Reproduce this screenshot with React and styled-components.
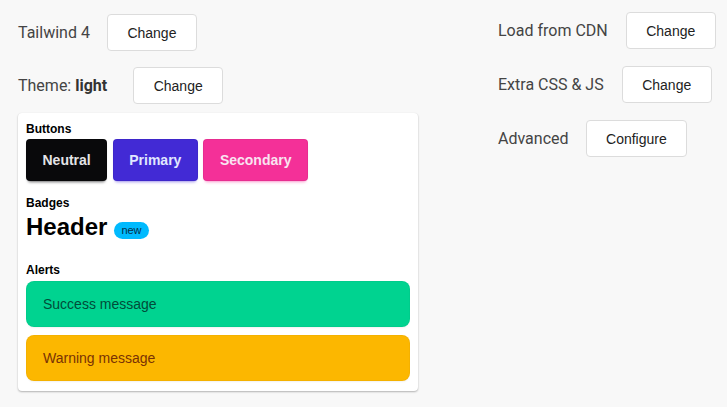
import React from 'react';
import styled, { createGlobalStyle } from 'styled-components';

const GlobalStyle = createGlobalStyle`
  html, body {
    margin: 0;
    padding: 0;
    background: #f8f8f8;
  }
  body {
    font-family: "Liberation Sans", Arial, sans-serif;
  }
`;

const Page = styled.div`
  display: flex;
  align-items: flex-start;
  padding-left: 18px;
  height: 407px;
  box-sizing: border-box;
`;

const Column = styled.div`
  display: flex;
  flex-direction: column;
  padding-top: ${(p) => p.top}px;
  width: ${(p) => (p.width ? `${p.width}px` : 'auto')};
  margin-left: ${(p) => p.offset || 0}px;
`;

const Settings = styled.div`
  display: flex;
  flex-direction: column;
  gap: ${(p) => p.gap}px;
`;

const Row = styled.div`
  display: flex;
  align-items: center;
  gap: ${(p) => p.gap || 17}px;
`;

const Label = styled.span`
  font-family: Roboto, "Liberation Sans", sans-serif;
  font-size: 16px;
  color: #444;
  b {
    font-weight: 700;
    color: #333;
  }
`;

const SettingButton = styled.button`
  height: 37px;
  padding: 0 19.5px;
  background: #fff;
  border: 1px solid #dcdcdc;
  border-radius: 4px;
  font-family: "Liberation Sans", Arial, sans-serif;
  font-size: 14px;
  color: #222;
  cursor: pointer;
`;

const Card = styled.div`
  margin-top: 9px;
  width: 400px;
  box-sizing: border-box;
  background: #fff;
  border-radius: 4px;
  box-shadow: 0 1px 2px rgba(0, 0, 0, 0.28), 0 0 1px rgba(0, 0, 0, 0.06);
  padding: 8px 8px 10px;
`;

const SectionTitle = styled.div`
  font-size: 12px;
  line-height: 16px;
  font-weight: 700;
  color: #000;
  margin-top: ${(p) => p.top || 0}px;
`;

const ButtonRow = styled.div`
  display: flex;
  gap: 5.5px;
  margin-top: 2px;
`;

const ThemeButton = styled.button`
  height: 42px;
  padding: 0 15.5px;
  border: 1px solid rgba(0, 0, 0, 0.05);
  border-radius: 4px;
  background: ${(p) => p.bg};
  color: ${(p) => p.fg};
  font-family: "Liberation Sans", Arial, sans-serif;
  font-size: 14px;
  font-weight: 700;
  box-shadow: 0 3px 3px -2px ${(p) => p.shadow};
  cursor: pointer;
`;

const HeaderRow = styled.div`
  display: flex;
  align-items: flex-end;
  gap: 7px;
`;

const Header = styled.h1`
  margin: 0;
  padding-top: 2px;
  font-size: 24px;
  line-height: 28px;
  font-weight: 700;
  color: #000;
`;

const Badge = styled.span`
  display: inline-flex;
  align-items: center;
  height: 17px;
  margin-bottom: 2px;
  padding: 0 7px;
  border-radius: 9px;
  background: #00bafe;
  color: #042e49;
  font-size: 11px;
  line-height: 1;
`;

const AlertList = styled.div`
  display: flex;
  flex-direction: column;
  gap: 8px;
  margin-top: 3px;
`;

const Alert = styled.div`
  padding: 12px 16px;
  border: 1px solid rgba(0, 0, 0, 0.03);
  border-radius: 8px;
  background: ${(p) => p.bg};
  color: ${(p) => p.fg};
  font-size: 14px;
  line-height: 20px;
  box-shadow: 0 2px 2px -1px rgba(0, 0, 0, 0.06);
`;

export default function App() {
  return (
    <>
      <GlobalStyle />
      <Page>
        <Column top={14} width={400}>
          <Settings gap={16}>
            <Row>
              <Label>Tailwind 4</Label>
              <SettingButton>Change</SettingButton>
            </Row>
            <Row gap={26}>
              <Label>
                Theme: <b>light</b>
              </Label>
              <SettingButton>Change</SettingButton>
            </Row>
          </Settings>
          <Card>
            <SectionTitle>Buttons</SectionTitle>
            <ButtonRow>
              <ThemeButton bg="#09090b" fg="#e4e4e7" shadow="rgba(9,9,11,0.6)">
                Neutral
              </ThemeButton>
              <ThemeButton bg="#422ad5" fg="#e0e7ff" shadow="rgba(66,42,213,0.5)">
                Primary
              </ThemeButton>
              <ThemeButton bg="#f43098" fg="#f9e4f0" shadow="rgba(244,48,152,0.5)">
                Secondary
              </ThemeButton>
            </ButtonRow>
            <SectionTitle top={14}>Badges</SectionTitle>
            <HeaderRow>
              <Header>Header</Header>
              <Badge>new</Badge>
            </HeaderRow>
            <SectionTitle top={21}>Alerts</SectionTitle>
            <AlertList>
              <Alert bg="#00d390" fg="#004c39">Success message</Alert>
              <Alert bg="#fcb700" fg="#793205">Warning message</Alert>
            </AlertList>
          </Card>
        </Column>
        <Column top={12} offset={80}>
          <Settings gap={17}>
            <Row gap={18}>
              <Label>Load from CDN</Label>
              <SettingButton>Change</SettingButton>
            </Row>
            <Row gap={18}>
              <Label>Extra CSS &amp; JS</Label>
              <SettingButton>Change</SettingButton>
            </Row>
            <Row>
              <Label>Advanced</Label>
              <SettingButton>Configure</SettingButton>
            </Row>
          </Settings>
        </Column>
      </Page>
    </>
  );
}
